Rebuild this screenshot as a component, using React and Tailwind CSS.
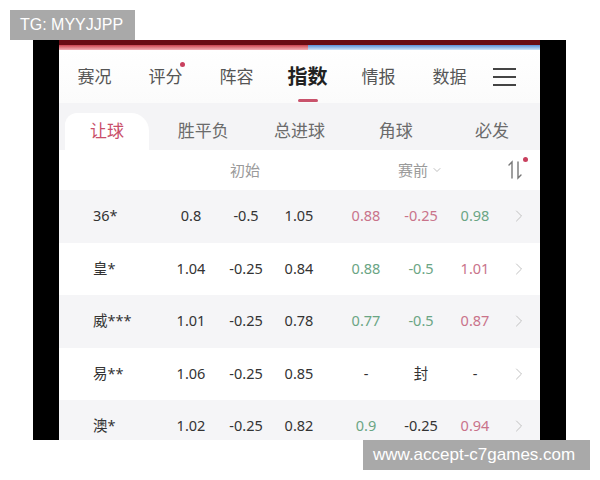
import { ChevronRight, ChevronDown } from 'lucide-react';

const RED = 'text-[#c9738a]';
const GREEN = 'text-[#6aa584]';
const DARK = 'text-[#333]';

const navItems = ['赛况', '评分', '阵容', '指数', '情报', '数据'];
const subTabs = ['让球', '胜平负', '总进球', '角球', '必发'];

const rows = [
    { name: '36*', init: ['0.8', '-0.5', '1.05'], live: [['0.88', RED], ['-0.25', RED], ['0.98', GREEN]] },
    { name: '皇*', init: ['1.04', '-0.25', '0.84'], live: [['0.88', GREEN], ['-0.5', GREEN], ['1.01', RED]] },
    { name: '威***', init: ['1.01', '-0.25', '0.78'], live: [['0.77', GREEN], ['-0.5', GREEN], ['0.87', RED]] },
    { name: '易**', init: ['1.06', '-0.25', '0.85'], live: [['-', DARK], ['封', DARK], ['-', DARK]] },
    { name: '澳*', init: ['1.02', '-0.25', '0.82'], live: [['0.9', GREEN], ['-0.25', DARK], ['0.94', RED]] },
];

const SortIcon = () => (
    <svg width="16" height="20" viewBox="0 0 16 20" fill="none" stroke="#777" strokeWidth="1.4" strokeLinecap="round">
        {/* up arrow, half head */}
        <path d="M5 18V2L2 5" />
        {/* down arrow, half head */}
        <path d="M11 2v16l3-3" />
    </svg>
);

const App = () => {
    return (
        <div className="relative w-[600px] h-[480px] bg-white overflow-hidden font-['Noto_Sans','Noto_Sans_CJK_SC',sans-serif]">
            {/* Phone screenshot */}
            <div className="ml-[33px] mt-[40px] w-[533px] h-[400px] bg-black px-[26px] overflow-hidden">
                <div className="h-full bg-white flex flex-col">
                    {/* status strips */}
                    <div className="h-[5px] shrink-0 bg-[#6a0b14]" />
                    <div className="h-[5px] shrink-0 flex">
                        <div className="w-[249px] bg-gradient-to-b from-[#c93f4f] to-[#f2b3bb]" />
                        <div className="flex-1 bg-gradient-to-b from-[#5a8fd8] to-[#d3e6f8]" />
                    </div>

                    {/* Top nav */}
                    <div className="h-[53px] shrink-0 flex items-center bg-gradient-to-b from-white to-[#fbfbfb]">
                        {navItems.map((item) => (
                            <div key={item} className="relative w-[71px] h-full flex items-center justify-center">
                                {item === '指数' ? (
                                    <span className="text-[20px] font-bold text-[#222] leading-none">{item}</span>
                                ) : (
                                    <span className="text-[17px] text-[#555] leading-none">{item}</span>
                                )}
                                {item === '评分' && (
                                    <span className="absolute top-[12px] right-[16px] w-[5px] h-[5px] rounded-full bg-[#c9405e]" />
                                )}
                                {item === '指数' && (
                                    <span className="absolute bottom-[1px] left-1/2 -translate-x-1/2 w-[20px] h-[3px] rounded-full bg-[#c9536c]" />
                                )}
                            </div>
                        ))}
                        <div className="ml-[8px] flex flex-col gap-[6px]">
                            <span className="block w-[23px] h-[2px] bg-[#444]" />
                            <span className="block w-[23px] h-[2px] bg-[#444]" />
                            <span className="block w-[23px] h-[2px] bg-[#444]" />
                        </div>
                    </div>

                    {/* Sub tabs */}
                    <div className="h-[47px] shrink-0 flex bg-[#f4f4f6] pt-[10px]">
                        {subTabs.map((tab, i) => (
                            <div key={tab} className="flex-1 flex">
                                {i === 0 ? (
                                    <div className="ml-[6px] w-[84px] h-full bg-white rounded-tl-[12px] rounded-tr-[18px] flex items-center justify-center pb-[2px] text-[17px] text-[#c9506a]">
                                        {tab}
                                    </div>
                                ) : (
                                    <div className="w-full flex items-center justify-center pb-[2px] text-[17px] text-[#6b6b6b]">
                                        {tab}
                                    </div>
                                )}
                            </div>
                        ))}
                    </div>

                    {/* Column header */}
                    <div className="h-[40px] shrink-0 flex items-center bg-white text-[15px] text-[#9a9a9a]">
                        <div className="w-[107px]" />
                        <div className="w-[158px] text-center">初始</div>
                        <div className="ml-[17px] w-[159px] flex items-center justify-center gap-[3px]">
                            赛前
                            <ChevronDown size={12} strokeWidth={1.5} className="text-[#aaa]" />
                        </div>
                        <div className="relative ml-[7px] flex items-center">
                            <SortIcon />
                            <span className="absolute -top-[3px] -right-[5px] w-[5px] h-[5px] rounded-full bg-[#c9405e]" />
                        </div>
                    </div>

                    {/* Odds rows */}
                    {rows.map((row, i) => (
                        <div
                            key={row.name}
                            className={`h-[52.5px] shrink-0 flex items-center text-[14.5px] ${i % 2 === 0 ? 'bg-[#f5f5f7]' : 'bg-white'}`}
                        >
                            <div className="w-[107px] pl-[34px] text-[#333]">{row.name}</div>
                            <div className="w-[50px] text-center text-[#333]">{row.init[0]}</div>
                            <div className="ml-[5px] w-[50px] text-center text-[#333]">{row.init[1]}</div>
                            <div className="ml-[3px] w-[50px] text-center text-[#333]">{row.init[2]}</div>
                            <div className={`ml-[17px] w-[50px] text-center ${row.live[0][1]}`}>{row.live[0][0]}</div>
                            <div className={`ml-[5px] w-[50px] text-center ${row.live[1][1]}`}>{row.live[1][0]}</div>
                            <div className={`ml-[4px] w-[50px] text-center ${row.live[2][1]}`}>{row.live[2][0]}</div>
                            <ChevronRight size={20} strokeWidth={1.1} className="ml-[9px] text-[#bbb]" />
                        </div>
                    ))}
                </div>
            </div>

            {/* Watermarks */}
            <div className="absolute left-[10px] top-[10px] w-[125px] h-[30px] bg-[#a9a9a9] flex items-center pl-[10px] text-[16px] text-white font-['Liberation_Sans',Arial,sans-serif]">
                TG: MYYJJPP
            </div>
            <div className="absolute left-[363px] top-[440px] w-[227px] h-[30px] bg-[#a9a9a9] flex items-center pl-[10px] text-[17px] text-white font-['Liberation_Sans',Arial,sans-serif]">
                www.accept-c7games.com
            </div>
        </div>
    );
};

export default App;
